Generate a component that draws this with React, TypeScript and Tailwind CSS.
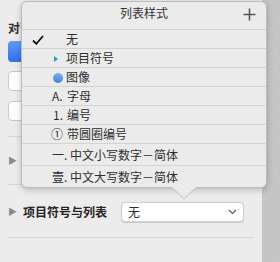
import React from "react";

const font = { fontFamily: '"Noto Sans CJK SC", "Liberation Sans", sans-serif' };

function Row({ children, last }: { children: React.ReactNode; last?: boolean }) {
  return (
    <div className={`flex items-center h-[19px] relative ${last ? "" : "border-b border-[#d3d3d3]"}`}>
      {children}
    </div>
  );
}

export default function App() {
  return (
    <div className="relative w-[280px] h-[262px] flex overflow-hidden text-[12px] text-[#2e2e2e]" style={font}>
      {/* left panel */}
      <div className="w-[262px] h-full bg-[#ececec] pl-[8px] pr-[8px] flex flex-col">
        <div className="h-[20px]" />
        <div className="h-[16px] leading-[16px] font-bold">对齐</div>
        <div className="h-[5px]" />
        <div className="h-[21px] w-[100px] rounded-[4px] bg-gradient-to-b from-[#5f9cf7] to-[#2f6ff0]" />
        <div className="h-[9px]" />
        <div className="h-[20px] w-[100px] rounded-[4px] bg-white border border-[#c9c9c9]" />
        <div className="h-[10px]" />
        <div className="h-[20px] w-[100px] rounded-[4px] bg-white border border-[#c9c9c9]" />
        <div className="h-[15px]" />
        <div className="border-t border-[#d6d6d6]" />
        <div className="h-[47px] flex items-center">
          <span className="text-[#8a8a8a] text-[9px]">▶</span>
        </div>
        <div className="border-t border-[#d6d6d6]" />
        <div className="h-[17px]" />
        <div className="h-[20px] flex items-center">
          <span className="text-[#8a8a8a] text-[9px] w-[15px]">▶</span>
          <span className="font-bold text-[12px] text-[#262626]">项目符号与列表</span>
          <div className="ml-[14px] w-[123px] h-[20px] bg-white rounded-[4px] border border-[#cfcfcf] flex items-center pl-[6px] pr-[6px] justify-between shadow-[0_0.5px_1px_rgba(0,0,0,0.15)]">
            <span className="text-[12px]">无</span>
            <svg width="9" height="6" viewBox="0 0 9 6"><path d="M1 1 L4.5 4.5 L8 1" fill="none" stroke="#555" strokeWidth="1.1" /></svg>
          </div>
        </div>
        <div className="h-[15px]" />
        <div className="border-t border-[#d6d6d6] mr-[0px]" />
      </div>
      {/* right strip */}
      <div
        className="w-[18px] h-full bg-[#c3c3c3]"
        style={{ backgroundImage: "repeating-linear-gradient(45deg, rgba(255,255,255,0.08) 0 1px, transparent 1px 3px)" }}
      />

      {/* popover */}
      <div className="absolute left-[21px] top-[1px] w-[246px] h-[187px] rounded-[6px] bg-[#ebebeb] border border-[#bcbcbc] shadow-[0_2px_6px_rgba(0,0,0,0.22)] flex flex-col">
        <div className="h-[28px] flex items-center justify-center relative border-b border-[#d0d0d0] pb-[5px]">
          <span className="text-[12px] text-[#333] leading-[14px]">列表样式</span>
          <svg className="absolute right-[10px] top-[6px]" width="13" height="13" viewBox="0 0 13 13">
            <path d="M6.5 0.5 V12.5 M0.5 6.5 H12.5" stroke="#555" strokeWidth="1.6" />
          </svg>
        </div>
        <Row>
          <svg className="absolute left-[10px] top-[5px]" width="12" height="10" viewBox="0 0 12 10">
            <path d="M1 5.5 L4.3 8.8 L11 1" fill="none" stroke="#111" strokeWidth="1.8" />
          </svg>
          <span className="ml-[44px]">无</span>
        </Row>
        <Row>
          <svg className="absolute left-[32px] top-[7px]" width="4" height="6" viewBox="0 0 4 6">
            <path d="M0 0 L4 3 L0 6 Z" fill="#2a9bd8" />
          </svg>
          <span className="ml-[44px]">项目符号</span>
        </Row>
        <Row>
          <div className="absolute left-[31px] top-[5px] w-[10px] h-[10px] rounded-full bg-gradient-to-b from-[#7fb0f0] to-[#3d7fe0]" />
          <span className="ml-[44px]">图像</span>
        </Row>
        <Row>
          <span className="ml-[30px] w-[15px]">A.</span>
          <span>字母</span>
        </Row>
        <Row>
          <span className="ml-[31px] w-[14px]">1.</span>
          <span>编号</span>
        </Row>
        <Row>
          <span className="ml-[29px] w-[16px]">①</span>
          <span>带圆圈编号</span>
        </Row>
        <div className="flex items-center h-[22px] border-b border-[#d3d3d3]">
          <span className="ml-[30px] w-[18px]">一.</span>
          <span>中文小写数字－简体</span>
        </div>
        <div className="flex items-center h-[21px]">
          <span className="ml-[30px] w-[18px]">壹.</span>
          <span>中文大写数字－简体</span>
        </div>
        {/* arrow */}
        <svg className="absolute left-[150px] top-[185px]" width="24" height="13" viewBox="0 0 24 13">
          <path d="M0 0.5 L12 12 L24 0.5" fill="#ebebeb" stroke="#bcbcbc" strokeWidth="1" />
          <rect x="0" y="0" width="24" height="1" fill="#ebebeb" />
        </svg>
      </div>
    </div>
  );
}
